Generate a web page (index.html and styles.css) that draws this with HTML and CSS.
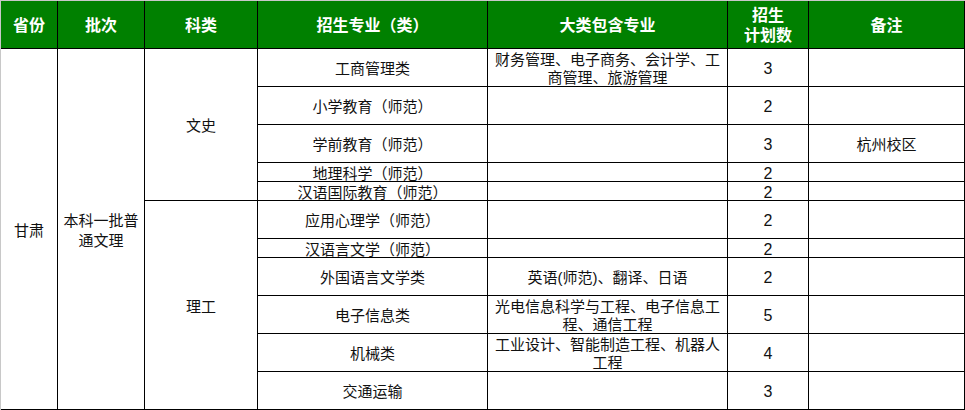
FILE: index.html
```html
<!DOCTYPE html>
<html lang="zh-CN">
<head>
<meta charset="utf-8">
<title>招生计划</title>
<link rel="stylesheet" href="styles.css">
</head>
<body>
<div class="sheet">
  <div class="c h">省份</div>
  <div class="c h">批次</div>
  <div class="c h">科类</div>
  <div class="c h">招生专业（类）</div>
  <div class="c h">大类包含专业</div>
  <div class="c h">招生<br>计划数</div>
  <div class="c h">备注</div>

  <div class="c span11">甘肃</div>
  <div class="c span11 tall">本科一批普通文理</div>
  <div class="c span5">文史</div>
  <div class="c">工商管理类</div>
  <div class="c">财务管理、电子商务、会计学、工商管理、旅游管理</div>
  <div class="c num">3</div>
  <div class="c"></div>

  <div class="c">小学教育（师范）</div>
  <div class="c"></div>
  <div class="c num">2</div>
  <div class="c"></div>

  <div class="c">学前教育（师范）</div>
  <div class="c"></div>
  <div class="c num">3</div>
  <div class="c">杭州校区</div>

  <div class="c">地理科学（师范）</div>
  <div class="c"></div>
  <div class="c num">2</div>
  <div class="c"></div>

  <div class="c">汉语国际教育（师范）</div>
  <div class="c"></div>
  <div class="c num">2</div>
  <div class="c"></div>

  <div class="c span6">理工</div>
  <div class="c">应用心理学（师范）</div>
  <div class="c"></div>
  <div class="c num">2</div>
  <div class="c"></div>

  <div class="c">汉语言文学（师范）</div>
  <div class="c"></div>
  <div class="c num">2</div>
  <div class="c"></div>

  <div class="c">外国语言文学类</div>
  <div class="c">英语(师范)、翻译、日语</div>
  <div class="c num">2</div>
  <div class="c"></div>

  <div class="c">电子信息类</div>
  <div class="c">光电信息科学与工程、电子信息工程、通信工程</div>
  <div class="c num">5</div>
  <div class="c"></div>

  <div class="c">机械类</div>
  <div class="c">工业设计、智能制造工程、机器人工程</div>
  <div class="c num">4</div>
  <div class="c"></div>

  <div class="c">交通运输</div>
  <div class="c"></div>
  <div class="c num">3</div>
  <div class="c"></div>
</div>
</body>
</html>
```

FILE: styles.css
```css
html, body {
  margin: 0;
  padding: 0;
  background: #fff;
}

.sheet {
  display: grid;
  grid-template-columns: 56px 86px 112px 229px 239px 80px 155px;
  grid-template-rows: 47px 37px 37px 37px 18px 18px 37px 18px 37px 37px 37px 37px;
  gap: 1px;
  width: max-content;
  background: #000;
  border-top: 1px solid #c8c8c8;
  border-left: 1px solid #c8c8c8;
  padding: 0 1px 1px 0;
  font-family: "Liberation Sans", "Noto Sans CJK SC", sans-serif;
}

.c {
  background: #fff;
  color: #111;
  display: flex;
  align-items: center;
  justify-content: center;
  text-align: center;
  padding-top: 3px;
  font-size: 15px;
  line-height: 18px;
  min-width: 0;
  min-height: 0;
}

.h {
  background: #008000;
  color: #fff;
  font-weight: bold;
  font-size: 16px;
  line-height: 20px;
}

.num {
  font-size: 16px;
}

.tall {
  line-height: 20px;
}

.span11 {
  grid-row: span 11;
}

.span5 {
  grid-row: span 5;
}

.span6 {
  grid-row: span 6;
}
```
